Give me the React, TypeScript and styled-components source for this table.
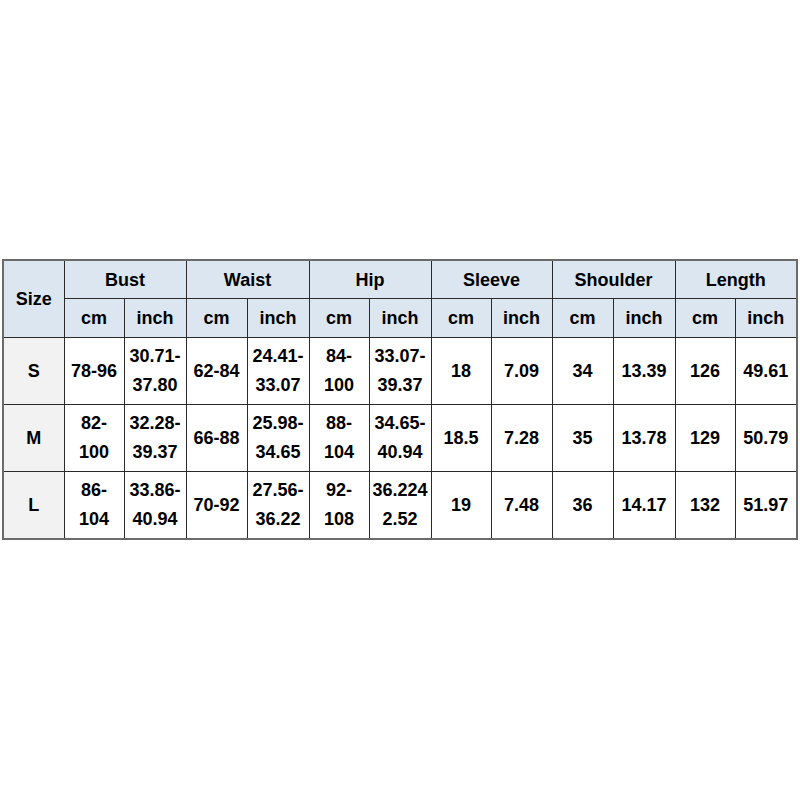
import React from "react";
import styled, { createGlobalStyle } from "styled-components";

const Global = createGlobalStyle`
  html, body { margin: 0; padding: 0; background: #ffffff; }
  body { font-family: "Liberation Sans", Arial, sans-serif; }
`;

const Page = styled.div`
  width: 800px;
  height: 800px;
  box-sizing: border-box;
  padding: 259px 0 0 2px;
  background: #ffffff;
`;

const Table = styled.table`
  border-collapse: collapse;
  table-layout: fixed;
  width: 795px;
  border: 2px solid #6b6b6b;
  font-family: "Liberation Sans", Arial, sans-serif;
  font-weight: bold;
  font-size: 18px;
  color: #000000;
`;

const Th = styled.th<{ $h: number }>`
  height: ${(p) => p.$h}px;
  padding: 0;
  background: #dce6f1;
  border: 1px solid #2a2a2a;
  font-weight: bold;
  text-align: center;
  vertical-align: middle;
  line-height: 20px;
`;

const Td = styled.td<{ $label?: boolean }>`
  height: 66px;
  padding: 0;
  border: 1px solid #2a2a2a;
  background: ${(p) => (p.$label ? "#f2f2f2" : "#ffffff")};
  text-align: center;
  vertical-align: middle;
  line-height: 29px;
  white-space: nowrap;
`;

const Line = styled.div`
  display: block;
`;

const widths = [61, 60, 62, 61, 62, 60, 62, 60, 61, 61, 62, 60, 62];
const groups = ["Bust", "Waist", "Hip", "Sleeve", "Shoulder", "Length"];

const rows: { size: string; cells: string[][] }[] = [
  {
    size: "S",
    cells: [
      ["78-96"],
      ["30.71-", "37.80"],
      ["62-84"],
      ["24.41-", "33.07"],
      ["84-", "100"],
      ["33.07-", "39.37"],
      ["18"],
      ["7.09"],
      ["34"],
      ["13.39"],
      ["126"],
      ["49.61"],
    ],
  },
  {
    size: "M",
    cells: [
      ["82-", "100"],
      ["32.28-", "39.37"],
      ["66-88"],
      ["25.98-", "34.65"],
      ["88-", "104"],
      ["34.65-", "40.94"],
      ["18.5"],
      ["7.28"],
      ["35"],
      ["13.78"],
      ["129"],
      ["50.79"],
    ],
  },
  {
    size: "L",
    cells: [
      ["86-", "104"],
      ["33.86-", "40.94"],
      ["70-92"],
      ["27.56-", "36.22"],
      ["92-", "108"],
      ["36.224", "2.52"],
      ["19"],
      ["7.48"],
      ["36"],
      ["14.17"],
      ["132"],
      ["51.97"],
    ],
  },
];

export default function App() {
  return (
    <Page>
      <Global />
      <Table>
        <colgroup>
          {widths.map((w, i) => (
            <col key={i} style={{ width: w }} />
          ))}
        </colgroup>
        <thead>
          <tr>
            <Th $h={37} rowSpan={2}>
              Size
            </Th>
            {groups.map((g) => (
              <Th $h={37} key={g} colSpan={2}>
                {g}
              </Th>
            ))}
          </tr>
          <tr>
            {groups.map((g) => (
              <React.Fragment key={g}>
                <Th $h={38}>cm</Th>
                <Th $h={38}>inch</Th>
              </React.Fragment>
            ))}
          </tr>
        </thead>
        <tbody>
          {rows.map((r) => (
            <tr key={r.size}>
              <Td $label>{r.size}</Td>
              {r.cells.map((c, i) => (
                <Td key={i}>
                  {c.map((l, j) => (
                    <Line key={j}>{l}</Line>
                  ))}
                </Td>
              ))}
            </tr>
          ))}
        </tbody>
      </Table>
    </Page>
  );
}
